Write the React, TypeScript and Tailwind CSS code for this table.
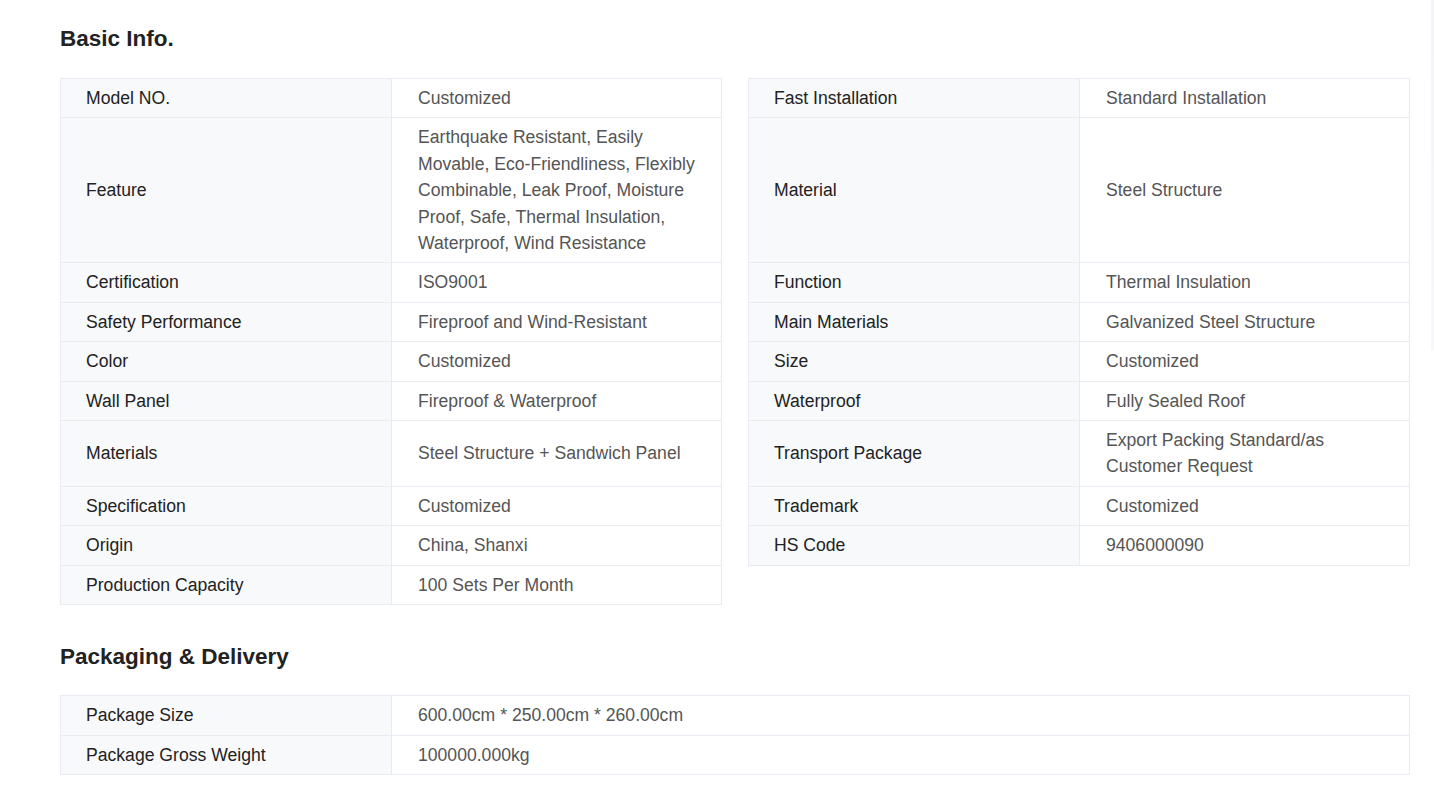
import React from "react";

type Pair = [string, string] | null;

const rows: { left: [string, string]; right: Pair }[] = [
  { left: ["Model NO.", "Customized"], right: ["Fast Installation", "Standard Installation"] },
  {
    left: [
      "Feature",
      "Earthquake Resistant, Easily Movable, Eco-Friendliness, Flexibly Combinable, Leak Proof, Moisture Proof, Safe, Thermal Insulation, Waterproof, Wind Resistance",
    ],
    right: ["Material", "Steel Structure"],
  },
  { left: ["Certification", "ISO9001"], right: ["Function", "Thermal Insulation"] },
  { left: ["Safety Performance", "Fireproof and Wind-Resistant"], right: ["Main Materials", "Galvanized Steel Structure"] },
  { left: ["Color", "Customized"], right: ["Size", "Customized"] },
  { left: ["Wall Panel", "Fireproof & Waterproof"], right: ["Waterproof", "Fully Sealed Roof"] },
  { left: ["Materials", "Steel Structure + Sandwich Panel"], right: ["Transport Package", "Export Packing Standard/as Customer Request"] },
  { left: ["Specification", "Customized"], right: ["Trademark", "Customized"] },
  { left: ["Origin", "China, Shanxi"], right: ["HS Code", "9406000090"] },
  { left: ["Production Capacity", "100 Sets Per Month"], right: null },
];

const font = { fontFamily: '"Liberation Sans", Arial, sans-serif' };

function LabelCell({ text, first }: { text: string; first: boolean }) {
  return (
    <div
      className={`flex items-center bg-[#f8f9fb] border-l border-b border-[#e8ebf1] pl-[25px] pr-[20px] py-[6px] text-[17.6px] leading-[26.4px] text-[#222222] ${
        first ? "border-t" : ""
      }`}
    >
      {text}
    </div>
  );
}

function ValueCell({ text, first }: { text: string; first: boolean }) {
  return (
    <div
      className={`flex items-center bg-white border-l border-r border-b border-[#e8ebf1] pl-[26px] pr-[26px] py-[6px] text-[17.6px] leading-[26.4px] text-[#555555] ${
        first ? "border-t" : ""
      }`}
    >
      {text}
    </div>
  );
}

export default function App() {
  return (
    <div className="relative w-[1434px] h-[788px] bg-white overflow-hidden" style={font}>
      <div className="absolute right-0 top-0 w-[3px] h-[350px] bg-gradient-to-b from-[#f4f4f6] to-[#f7f7f9]" />
      <div className="pl-[60px] pt-[26px] w-[1410px]">
        <h2 className="text-[22.5px] leading-[26px] font-bold text-[#222222] mb-[26px]">Basic Info.</h2>
        <div className="grid grid-cols-[331px_331px_26px_331px_331px]">
          {rows.map((r, i) => (
            <React.Fragment key={i}>
              <LabelCell text={r.left[0]} first={i === 0} />
              <ValueCell text={r.left[1]} first={i === 0} />
              <div />
              {r.right ? (
                <>
                  <LabelCell text={r.right[0]} first={i === 0} />
                  <ValueCell text={r.right[1]} first={i === 0} />
                </>
              ) : (
                <>
                  <div />
                  <div />
                </>
              )}
            </React.Fragment>
          ))}
        </div>
        <h2 className="text-[22.5px] leading-[26px] font-bold text-[#222222] mt-[39px] mb-[25px]">Packaging &amp; Delivery</h2>
        <div className="grid grid-cols-[331px_1019px]">
          <LabelCell text="Package Size" first={true} />
          <ValueCell text="600.00cm * 250.00cm * 260.00cm" first={true} />
          <LabelCell text="Package Gross Weight" first={false} />
          <ValueCell text="100000.000kg" first={false} />
        </div>
      </div>
    </div>
  );
}
